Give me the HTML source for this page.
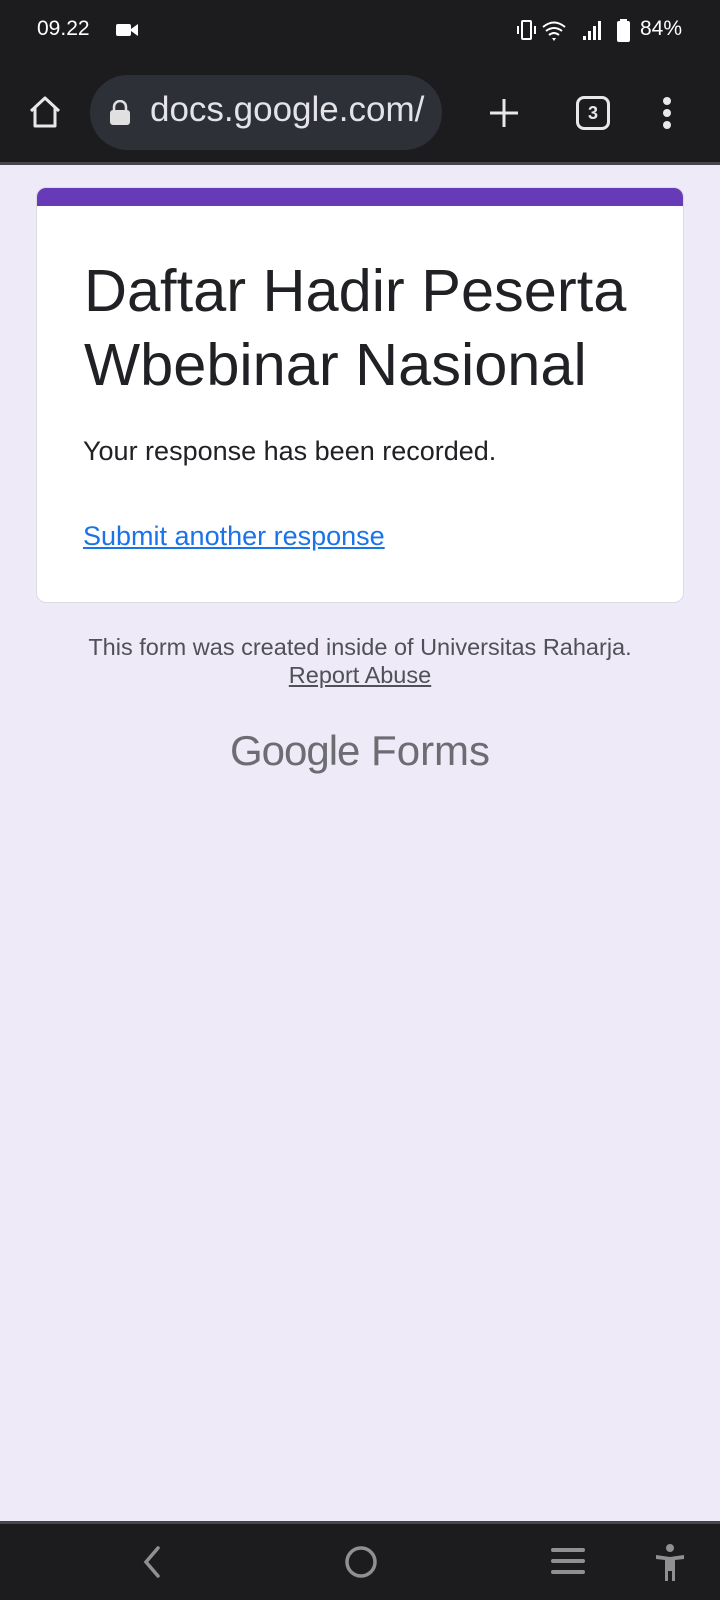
<!DOCTYPE html>
<html><head><meta charset="utf-8"><style>
*{margin:0;padding:0;box-sizing:border-box}
body{width:720px;height:1600px;background:#eeeaf8;font-family:"Liberation Sans",Roboto,sans-serif;position:relative;overflow:hidden}
.top{position:absolute;left:0;top:0;width:720px;height:165px;background:#1c1c1e;border-bottom:3px solid #45454a}
.abs{position:absolute}
.card{position:absolute;left:36px;top:187px;width:648px;height:416px;background:#fff;border-radius:10px;border:1px solid #dadce0;overflow:hidden}
.strip{position:absolute;left:0;top:0;width:100%;height:18px;background:#673ab7}
.nav{position:absolute;left:0;top:1521px;width:720px;height:79px;background:#1c1c1e;border-top:3px solid #45454a}
</style></head><body>
<div class="top">
  <div class="abs" style="left:37px;top:17px;color:#fff;font-size:21px;">09.22</div>
  <svg class="abs" style="left:116px;top:22px" width="24" height="16"><rect x="0" y="2" width="15" height="12" rx="2" fill="#fff"/><path d="M15 7 L22 2 V14 L15 9Z" fill="#fff"/></svg>
  <svg class="abs" style="left:516px;top:18px" width="170" height="26">
    <g fill="none" stroke="#fff" stroke-width="2"><rect x="6" y="3" width="9" height="18" rx="1"/><path d="M2 8v8M19 8v8"/></g>
    <path d="M27 9 Q38 0 49 9 M30 13 Q38 7 46 13 M33 17 Q38 13 43 17" stroke="#fff" stroke-width="2" fill="none"/><path d="M36 20h4l-2 3z" fill="#fff"/>
    <rect x="67" y="18" width="3" height="4" fill="#fff"/><rect x="72" y="13" width="3" height="9" fill="#fff"/><rect x="77" y="8" width="3" height="14" fill="#fff"/><rect x="82" y="3" width="3" height="19" fill="#fff"/>
    <rect x="101" y="3" width="13" height="21" rx="2" fill="#fff"/><rect x="104" y="1" width="7" height="3" fill="#fff"/>
  </svg>
  <div class="abs" style="left:640px;top:17px;color:#fff;font-size:21px;">84%</div>
  <svg class="abs" style="left:28px;top:95px" width="34" height="34"><path d="M3 16 L17 3 L31 16 M7 13 V31 H27 V13" stroke="#e8e8e8" stroke-width="3" fill="none" stroke-linejoin="round"/></svg>
  <div class="abs" style="left:90px;top:75px;width:352px;height:75px;border-radius:38px;background:#2e3038;overflow:hidden">
    <svg class="abs" style="left:19px;top:25px" width="22" height="26"><path d="M5 11 V7 a6 6 0 0 1 12 0 V11" stroke="#e0e0e0" stroke-width="2.5" fill="none"/><rect x="1" y="10" width="20" height="15" rx="3" fill="#e0e0e0"/></svg>
    <div class="abs" style="left:60px;top:15px;color:#e4e4e8;font-size:35px;white-space:nowrap;width:280px;overflow:hidden">docs.google.com/</div>
  </div>
  <svg class="abs" style="left:488px;top:97px" width="32" height="32"><path d="M16 2V30M2 16H30" stroke="#e8e8e8" stroke-width="3"/></svg>
  <div class="abs" style="left:576px;top:96px;width:34px;height:34px;border:3px solid #e8e8e8;border-radius:8px;color:#e8e8e8;font-size:18px;font-weight:bold;text-align:center;line-height:28px">3</div>
  <svg class="abs" style="left:660px;top:96px" width="14" height="34"><circle cx="7" cy="5" r="4" fill="#e8e8e8"/><circle cx="7" cy="17" r="4" fill="#e8e8e8"/><circle cx="7" cy="29" r="4" fill="#e8e8e8"/></svg>
</div>
<div class="card"><div class="strip"></div>
  <div class="abs" style="left:47px;top:66px;font-size:59.5px;line-height:74px;color:#202124;white-space:nowrap">Daftar Hadir Peserta<br>Wbebinar Nasional</div>
  <div class="abs" style="left:46px;top:248px;font-size:27px;color:#202124;white-space:nowrap">Your response has been recorded.</div>
  <div class="abs" style="left:46px;top:333px;font-size:27px;color:#1a73e8;text-decoration:underline;white-space:nowrap">Submit another response</div>
</div>
<div class="abs" style="left:0;top:633px;width:720px;text-align:center;font-size:23.5px;line-height:28px;color:#505058">This form was created inside of Universitas Raharja.<br><span style="text-decoration:underline">Report Abuse</span></div>
<div class="abs" style="left:0;top:727px;width:720px;text-align:center;font-size:42px;color:#6c6c72;white-space:nowrap"><span style="letter-spacing:-1px">Google</span> Forms</div>
<div class="nav">
  <svg class="abs" style="left:138px;top:20px" width="26" height="36"><path d="M20 4 L8 18 L20 32" stroke="#909090" stroke-width="3.5" fill="none" stroke-linecap="round"/></svg>
  <svg class="abs" style="left:343px;top:20px" width="36" height="36"><ellipse cx="18" cy="18" rx="14" ry="14" stroke="#909090" stroke-width="3.5" fill="none"/></svg>
  <svg class="abs" style="left:550px;top:22px" width="36" height="30"><path d="M3 4H33M3 15H33M3 26H33" stroke="#909090" stroke-width="4" stroke-linecap="round"/></svg>
  <svg class="abs" style="left:654px;top:19px" width="32" height="40"><circle cx="16" cy="5" r="4" fill="#909090"/><path d="M2 12 L16 14 L30 12 V16 L21 17 V38 H18 V28 H14 V38 H11 V17 L2 16Z" fill="#909090"/></svg>
</div>
</body></html>
